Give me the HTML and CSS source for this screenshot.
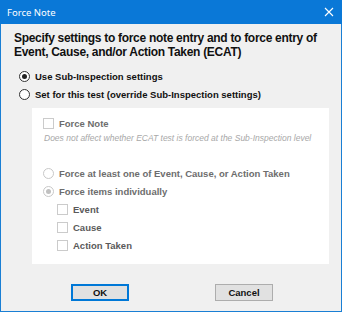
FILE: index.html
```html
<!DOCTYPE html>
<html>
<head>
<meta charset="utf-8">
<link rel="stylesheet" href="styles.css">
</head>
<body>
<div class="window">
  <div class="titlebar">
    <span class="title">Force Note</span>
    <svg class="close" width="10" height="10" viewBox="0 0 10 10"><path d="M1 1L9 9M9 1L1 9" stroke="#fff" stroke-width="1.1" fill="none"/></svg>
  </div>
  <div class="content">
    <div class="heading">Specify settings to force note entry and to force entry of<br>Event, Cause, and/or Action Taken (ECAT)</div>
    <div class="mode-list">
      <div class="row"><span class="radio checked"></span><span class="label strong">Use Sub-Inspection settings</span></div>
      <div class="row"><span class="radio"></span><span class="label strong">Set for this test (override Sub-Inspection settings)</span></div>
    </div>
    <div class="panel">
      <div class="row"><span class="check disabled"></span><span class="label dim">Force Note</span></div>
      <div class="note">Does not affect whether ECAT test is forced at the Sub-Inspection level</div>
      <div class="group">
        <div class="row"><span class="radio disabled"></span><span class="label dim">Force at least one of Event, Cause, or Action Taken</span></div>
        <div class="row"><span class="radio disabled checked"></span><span class="label dim">Force items individually</span></div>
        <div class="sub">
          <div class="row"><span class="check disabled"></span><span class="label item">Event</span></div>
          <div class="row"><span class="check disabled"></span><span class="label item">Cause</span></div>
          <div class="row"><span class="check disabled"></span><span class="label item">Action Taken</span></div>
        </div>
      </div>
    </div>
    <div class="buttons">
      <button class="btn default">OK</button>
      <button class="btn">Cancel</button>
    </div>
  </div>
</div>
</body>
</html>
```
FILE: styles.css
```css
* { box-sizing: border-box; }
html, body { margin: 0; padding: 0; }
body { width: 342px; height: 312px; overflow: hidden; background: #f0f0f0; }
.window {
  width: 342px; height: 312px;
  border: 1px solid #1a7fd4; border-top: 0;
  display: flex; flex-direction: column;
  background: #f0f0f0;
}
.titlebar {
  flex: none;
  height: 24px; background: #0a78d7;
  display: flex; align-items: center; justify-content: space-between;
  padding: 0 8px 0 7px; margin: 0 -1px;
}
.title { color: #fff; font-family: "Noto Sans", sans-serif; font-size: 9.5px; }
.close { display: block; }
.content {
  flex: 1; display: flex; flex-direction: column;
  padding: 7px 0 0 13px;
  font-family: "Liberation Sans", Arial, sans-serif;
}
.heading { font-size: 12px; letter-spacing: -0.3px; font-weight: bold; line-height: 14px; color: #111; white-space: nowrap; }
.mode-list { margin-top: 8px; margin-left: 5px; }
.row { display: flex; align-items: center; height: 18px; }
.label { font-size: 9.5px; white-space: nowrap; }
.strong { font-weight: bold; color: #111; }
.dim { font-weight: bold; color: #6d6d6d; }
.item { color: #5a5a5a; font-weight: bold; }
.radio {
  width: 11px; height: 11px; border-radius: 50%;
  border: 1px solid #333; background: #fff;
  display: flex; align-items: center; justify-content: center;
  margin-right: 5px; flex: none;
}
.radio.checked::after { content: ""; width: 5px; height: 5px; border-radius: 50%; background: #222; }
.radio.disabled { border-color: #c8c8c8; }
.radio.disabled.checked::after { background: #c0c0c0; }
.check {
  width: 11px; height: 11px; border: 1px solid #cbcbcb; background: #fff;
  margin-right: 5px; flex: none;
}
.panel {
  margin: 5px 0 0 18px; width: 297px; height: 156px; flex: none;
  background: #fff; padding: 6px 0 0 11px;
}
.note {
  font-size: 8.5px; font-style: italic; color: #a8a8a8;
  height: 12px; line-height: 12px; margin-left: 1px; white-space: nowrap;
}
.group { margin-top: 20px; }
.sub { margin-left: 14px; }
.buttons { display: flex; gap: 86px; margin: 20px 0 0 57px; }
.btn {
  width: 58px; height: 17px; padding: 0;
  font-family: "Liberation Sans", Arial, sans-serif; font-size: 9.5px; font-weight: bold; color: #111;
  background: #e1e1e1; border: 1px solid #adadad; border-radius: 0;
}
.btn.default { border: 2px solid #0078d7; }
```
